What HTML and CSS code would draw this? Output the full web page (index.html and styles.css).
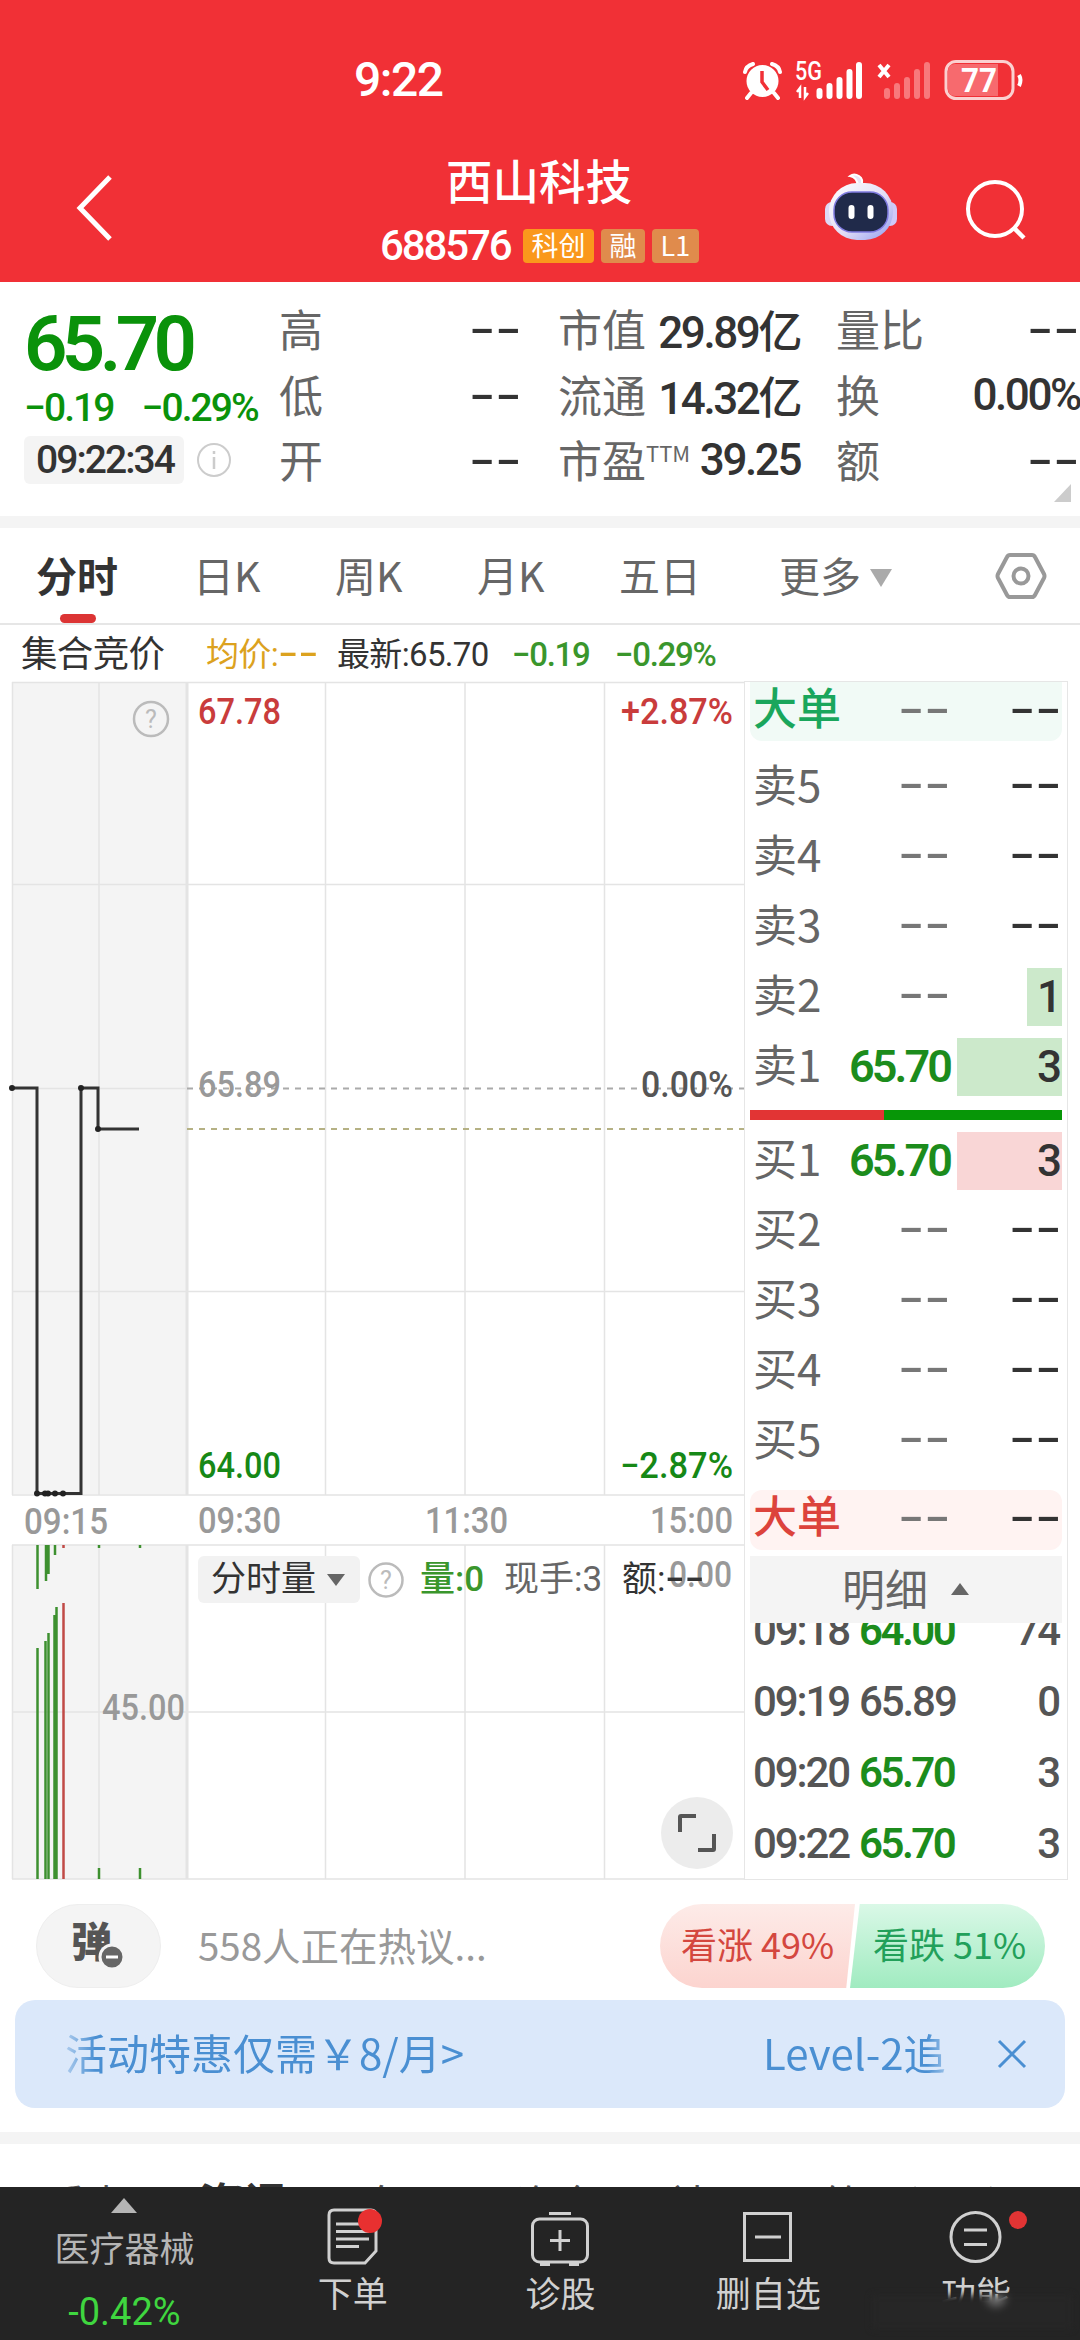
FILE: index.html
```html
<!DOCTYPE html>
<html lang="zh-CN">
<head>
    <meta charset="UTF-8">
    <meta name="viewport" content="width=device-width, initial-scale=1.0">
    <title>西山科技 688576</title>
    <link rel="stylesheet" href="styles.css">
</head>
<body>
    <header class="top">
        <div class="status-bar">
            <span class="clock">9:22</span>
            <svg class="status-icons" viewBox="738 54 288 50">
                <!-- alarm -->
                <circle cx="761.500" cy="80" r="16" fill="#fff"/>
                <path d="M744 71q1-6 8-8M779 71q-1-6-8-8M750 92l-4 5M773 92l4 5" stroke="#fff" stroke-width="4" fill="none" stroke-linecap="round"/>
                <path d="M761 70v11l6 8" stroke="#f13036" stroke-width="3.500" fill="none"/>
                <!-- signals -->
                <text class="net" x="794" y="79" textLength="27" lengthAdjust="spacingAndGlyphs">5G</text>
                <path d="M799 97V87l-3 4M804 86v10l3-4" stroke="#fff" stroke-width="2.500" fill="none"/>
                <path d="M818.500 95v-5M828.500 95V85M838.500 95V79M848.500 95V71M858 95V64" stroke="#fff" stroke-width="6" stroke-linecap="round"/>
                <path d="M878 64l10 12M888 64l-10 12" stroke="#fff" stroke-width="4"/>
                <path d="M886 95v-5M896 95V85M906 95V79M916 95V71M926 95V64" stroke="#f8797c" stroke-width="6" stroke-linecap="round"/>
                <!-- battery -->
                <rect x="945" y="60.500" width="67" height="37" rx="10" fill="#f13036" stroke="#fbd0d0" stroke-width="3"/>
                <path d="M954 63h43v32h-43q-7 0-7-7V70q0-7 7-7z" fill="#f76a6e"/>
                <path d="M1018 74q3 5 0 11" stroke="#fff" stroke-width="4" fill="none"/>
                <text class="battery" x="960" y="91" textLength="36" lengthAdjust="spacingAndGlyphs">77</text>
            </svg>
        </div>
        <div class="title-bar">
            <svg class="back" viewBox="0 0 44 70"><path d="M39 4L9 35l30 31" fill="none" stroke="#fff" stroke-width="5"/></svg>
            <div class="title">
                <h1>西山科技</h1>
                <div class="code-row">
                    <span class="num code">688576</span>
                    <span class="tag tag-main">科创</span>
                    <span class="tag">融</span>
                    <span class="tag">L1</span>
                </div>
            </div>
            <svg class="robot" viewBox="822 170 80 74">
                <defs>
                    <linearGradient id="shell" x1="0" y1="0" x2="1" y2="1">
                        <stop offset="0" stop-color="#fff"/>
                        <stop offset=".55" stop-color="#e3def6"/>
                        <stop offset="1" stop-color="#8f9cf0"/>
                    </linearGradient>
                </defs>
                <path d="M861 186q3-7-2-10q-5-3-9 0q7 1 8 10z" fill="#e9e4f7" stroke="#fff" stroke-width="2"/>
                <rect x="825" y="202" width="14" height="24" rx="7" fill="#ded9f5"/>
                <rect x="883" y="202" width="14" height="24" rx="7" fill="#cfc9f8"/>
                <rect x="829" y="183" width="64" height="57" rx="28" fill="url(#shell)"/>
                <rect x="834" y="192" width="54" height="40" rx="18" fill="#202a4a" stroke="#7f7be0" stroke-width="1.500"/>
                <path d="M851.500 208v8M870.500 208v8" stroke="#fff" stroke-width="6" stroke-linecap="round"/>
            </svg>
            <svg class="search" viewBox="0 0 64 64">
                <circle cx="31" cy="31" r="27" fill="none" stroke="#fff" stroke-width="4"/>
                <path d="M50 50l10 10" stroke="#fff" stroke-width="4.500"/>
            </svg>
        </div>
    </header>

    <section class="summary">
        <div class="quote">
            <div class="price">65.70</div>
            <div class="change"><span>−0.19</span><span>−0.29%</span></div>
            <div class="time-row">
                <span class="time num">09:22:34</span>
                <svg class="info" viewBox="0 0 36 36"><circle cx="18" cy="18" r="16" fill="none" stroke="#ccc" stroke-width="2"/><path d="M18 15v12M18 9v3" stroke="#ccc" stroke-width="2.500"/></svg>
            </div>
        </div>
        <div class="metrics">
            <div class="metric"><label>高</label><b class="dash">--</b></div>
            <div class="metric"><label>市值</label><b>29.89亿</b></div>
            <div class="metric"><label>量比</label><b class="dash">--</b></div>
            <div class="metric"><label>低</label><b class="dash">--</b></div>
            <div class="metric"><label>流通</label><b>14.32亿</b></div>
            <div class="metric"><label>换</label><b>0.00%</b></div>
            <div class="metric"><label>开</label><b class="dash">--</b></div>
            <div class="metric"><label>市盈<sup>TTM</sup></label><b>39.25</b></div>
            <div class="metric"><label>额</label><b class="dash">--</b></div>
        </div>
        <i class="corner"></i>
    </section>

    <nav class="tabs">
        <a class="tab active">分时</a>
        <a class="tab">日K</a>
        <a class="tab">周K</a>
        <a class="tab">月K</a>
        <a class="tab">五日</a>
        <a class="tab more">更多<i class="caret"></i></a>
        <svg class="setting" viewBox="0 0 52 48">
            <path d="M15 3h22q2 0 3 2l9 17q1 2 0 4l-9 17q-1 2-3 2H15q-2 0-3-2L3 26q-1-2 0-4l9-17q1-2 3-2z" fill="none" stroke="#999" stroke-width="4"/>
            <circle cx="26" cy="24" r="7.500" fill="none" stroke="#999" stroke-width="4"/>
        </svg>
    </nav>

    <div class="legend">
        <span class="auction">集合竞价</span>
        <span class="avg">均价:<b class="dash">--</b></span>
        <span class="last">最新:65.70</span>
        <span class="down">−0.19</span>
        <span class="down">−0.29%</span>
    </div>

    <main class="board">
        <div class="chart">
            <svg class="plot" viewBox="0 681 744 1200">
                <rect x="12" y="682" width="175" height="812" fill="#f4f4f4"/>
                <rect x="12" y="1545" width="175" height="334" fill="#f4f4f4"/>
                <path class="grid" d="M12 682.500H744M12 884.500H744M12 1088.500H187M12 1291.500H744M12 1495H744M12 1545H744M12 1712H744M12 1879H744M12.500 682V1495M99 682V1495M325.500 682V1495M465 682V1495M604.500 682V1495M12.500 1545V1879M99 1545V1879M325.500 1545V1879M465 1545V1879M604.500 1545V1879"/>
                <path class="grid strong" d="M187 682V1495M187 1545V1879"/>
                <path class="ref-line" d="M187 1088.500H744"/>
                <path class="ref-line last-line" d="M187 1129H744"/>

                <path class="line" d="M12 1088H37V1493.500H81V1088H98V1129H139"/>
                <g fill="#222">
                    <circle cx="12" cy="1088" r="3"/><circle cx="81" cy="1088" r="3"/><circle cx="98" cy="1129" r="3"/>
                    <circle cx="37" cy="1493.500" r="3"/><circle cx="45" cy="1493.500" r="3"/><circle cx="48" cy="1493.500" r="3"/>
                    <circle cx="55" cy="1493.500" r="3"/><circle cx="63" cy="1493.500" r="3"/>
                </g>

                <g stroke-width="2.500" stroke="#3d902f">
                    <path d="M37.500 1545v44M46 1545v36M48.500 1545v29M55 1545v10M99 1545v3M140 1545v3"/>
                    <path d="M37.500 1648V1879M45.500 1641V1879M48.500 1633V1879M54.500 1615V1879M56.500 1607V1879M99 1868v11M140 1868v11"/>
                    <path stroke="#c04a46" d="M63.500 1545v3M63.500 1603V1879"/>
                </g>

                <circle cx="151" cy="719" r="17" fill="none" stroke="#bbb" stroke-width="2.500"/>
                <text class="help" x="151" y="728" text-anchor="middle">?</text>
                <g class="axis">
                    <text class="up" x="198" y="724" textLength="83" lengthAdjust="spacingAndGlyphs">67.78</text>
                    <text class="up" x="621" y="724" textLength="112" lengthAdjust="spacingAndGlyphs">+2.87%</text>
                    <text x="198" y="1097" textLength="83" lengthAdjust="spacingAndGlyphs">65.89</text>
                    <text class="zero" x="641" y="1097" textLength="92" lengthAdjust="spacingAndGlyphs">0.00%</text>
                    <text class="down" x="198" y="1478" textLength="83" lengthAdjust="spacingAndGlyphs">64.00</text>
                    <text class="down" x="620" y="1478" textLength="113" lengthAdjust="spacingAndGlyphs">−2.87%</text>
                    <text x="24" y="1534" textLength="84" lengthAdjust="spacingAndGlyphs">09:15</text>
                    <text x="198" y="1533" textLength="83" lengthAdjust="spacingAndGlyphs">09:30</text>
                    <text x="425" y="1533" textLength="83" lengthAdjust="spacingAndGlyphs">11:30</text>
                    <text x="650" y="1533" textLength="83" lengthAdjust="spacingAndGlyphs">15:00</text>
                    <text x="102" y="1720" textLength="83" lengthAdjust="spacingAndGlyphs">45.00</text>
                    <text x="669" y="1587" textLength="63" lengthAdjust="spacingAndGlyphs">0.00</text>
                </g>
            </svg>
            <div class="volume-bar">
                <span class="picker">分时量<i class="caret"></i></span>
                <svg class="info" viewBox="0 0 36 36"><circle cx="18" cy="18" r="16.500" fill="none" stroke="#bbb" stroke-width="2.500"/><text class="help" x="18" y="27" text-anchor="middle">?</text></svg>
                <span class="vol down">量:0</span>
                <span class="hand">现手:3</span>
                <span class="amount">额:<b class="dash">--</b></span>
            </div>
            <div class="expand">
                <svg viewBox="0 0 72 72"><path d="M19 35V20q0-1 1-1h15M53 37v15q0 1-1 1H37" fill="none" stroke="#555" stroke-width="4"/></svg>
            </div>
        </div>

        <aside class="book">
            <div class="row big sell"><label>大单</label><b class="dash">--</b><b class="dash">--</b></div>
            <div class="levels">
                <div class="row"><label>卖5</label><b class="dash">--</b><b class="dash">--</b></div>
                <div class="row"><label>卖4</label><b class="dash">--</b><b class="dash">--</b></div>
                <div class="row"><label>卖3</label><b class="dash">--</b><b class="dash">--</b></div>
                <div class="row"><label>卖2</label><b class="dash">--</b><span class="qty ask" style="width: 35px">1</span></div>
                <div class="row"><label>卖1</label><b class="deal">65.70</b><span class="qty ask" style="width: 105px">3</span></div>
            </div>
            <div class="ratio"><i style="width: 134px"></i></div>
            <div class="levels">
                <div class="row"><label>买1</label><b class="deal">65.70</b><span class="qty bid" style="width: 105px">3</span></div>
                <div class="row"><label>买2</label><b class="dash">--</b><b class="dash">--</b></div>
                <div class="row"><label>买3</label><b class="dash">--</b><b class="dash">--</b></div>
                <div class="row"><label>买4</label><b class="dash">--</b><b class="dash">--</b></div>
                <div class="row"><label>买5</label><b class="dash">--</b><b class="dash">--</b></div>
            </div>
            <div class="row big buy"><label>大单</label><b class="dash">--</b><b class="dash">--</b></div>
            <div class="detail-head">明细<i class="caret up-caret"></i></div>
            <div class="ticks">
                <div class="tick"><span>09:18</span><b>64.00</b><span>74</span></div>
                <div class="tick"><span>09:19</span><span>65.89</span><span>0</span></div>
                <div class="tick"><span>09:20</span><b>65.70</b><span>3</span></div>
                <div class="tick"><span>09:22</span><b>65.70</b><span>3</span></div>
            </div>
        </aside>
    </main>

    <div class="discuss">
        <div class="bullet">弹<svg viewBox="0 0 28 28"><circle cx="14" cy="14" r="12" fill="#666" stroke="#f4f4f4" stroke-width="3"/><path d="M8 14h12" stroke="#fff" stroke-width="3"/></svg></div>
        <span class="talk">558人正在热议...</span>
        <div class="vote bull">看涨 49%</div>
        <div class="vote bear">看跌 51%</div>
    </div>

    <div class="promo">
        <span class="promo-text">活动特惠仅需￥8/月&gt;</span>
        <span class="promo-next">Level-2追</span>
        <svg class="close" viewBox="0 0 32 32"><path d="M3 3l26 26M29 3L3 29" stroke="#4a8fd2" stroke-width="3"/></svg>
    </div>

    <div class="news-tabs">
        <span>看点</span>
        <span class="current">资讯</span>
        <span>盘口</span>
        <span>资金</span>
        <span>社区</span>
        <span>简况(F10)</span>
    </div>

    <footer class="dock">
        <div class="sector">
            <i class="caret up-caret"></i>
            <span>医疗器械</span>
            <em>-0.42%</em>
        </div>
        <div class="dock-item">
            <svg viewBox="0 0 64 60"><path d="M13 4h37q5 0 5 5v36L44 57H13q-5 0-5-5V9q0-5 5-5z" fill="none" stroke="#d0d0d0" stroke-width="3"/><path d="M15 18h28M15 25.500h33M15 33h33M15 40.500h23" stroke="#d0d0d0" stroke-width="3"/><circle cx="49" cy="15" r="12" fill="#e83030"/></svg>
            <span>下单</span>
        </div>
        <div class="dock-item">
            <svg viewBox="0 0 64 60"><rect x="4.500" y="13" width="55" height="43" rx="7" fill="none" stroke="#d0d0d0" stroke-width="3"/><path d="M21 7.500h22M32 24v21M22 34.500h20M12 58.500h10M41 58.500h10" stroke="#d0d0d0" stroke-width="3"/></svg>
            <span>诊股</span>
        </div>
        <div class="dock-item">
            <svg viewBox="0 0 64 60"><path d="M8.500 7.500h46v47h-46zM19 31h26" fill="none" stroke="#d0d0d0" stroke-width="3"/></svg>
            <span>删自选</span>
        </div>
        <div class="dock-item func">
            <svg viewBox="0 0 64 60"><circle cx="31.500" cy="31" r="24.500" fill="none" stroke="#d0d0d0" stroke-width="3"/><path d="M20 24h23M20 38.500h23" stroke="#d0d0d0" stroke-width="3"/></svg>
            <i class="dot"></i>
            <span>功能</span>
            <i class="smudge"></i>
        </div>
    </footer>
</body>
</html>
```

FILE: styles.css
```css
* {
    box-sizing: border-box;
}
body {
    margin: 0;
    width: 1080px;
    height: 2340px;
    overflow: hidden;
    background: #fff;
    color: #333;
    font-family: "Noto Sans CJK SC", sans-serif;
    font-size: 42px;
}
svg {
    display: block;
    flex: none;
}
i, em {
    font-style: normal;
}
b {
    font-weight: 500;
}
.num {
    font-family: Roboto, "Noto Sans CJK SC", sans-serif;
    letter-spacing: -0.05em;
}
.dash {
    display: inline-block;
    font-family: "DejaVu Sans", sans-serif;
    font-size: 52px;
    font-weight: 400;
    line-height: 50px;
    letter-spacing: 0;
    padding-bottom: 11px;
    transform: scaleX(1.4);
    transform-origin: right center;
}
.caret {
    display: inline-block;
    border: 11px solid transparent;
    border-top: 18px solid #aaa;
    border-bottom: 0;
}
.up-caret {
    border-top: 0;
    border-bottom: 12px solid #666;
}

/* header */
.top {
    height: 282px;
    background: #f13036;
    color: #fff;
}
.status-bar {
    display: flex;
    height: 141px;
    padding: 55px 53px 0 354px;
    justify-content: space-between;
}
.clock {
    font: 500 48px/50px Roboto, sans-serif;
    letter-spacing: -1.5px;
}
.status-icons {
    width: 288px;
    height: 50px;
}
.net {
    font: 500 25px Roboto, sans-serif;
    fill: #fff;
}
.battery {
    font: 700 33px Roboto, sans-serif;
    fill: #fff;
}
.title-bar {
    display: flex;
    height: 141px;
    padding-left: 71px;
}
.back {
    width: 44px;
    height: 70px;
    margin-top: 32px;
}
.title {
    width: 400px;
    margin-left: 265px;
    margin-right: 42px;
}
h1 {
    margin: 10px 0 0 66px;
    font-size: 46.5px;
    font-weight: 500;
    line-height: 56px;
}
.code-row {
    display: flex;
    align-items: center;
    height: 34px;
    margin-top: 22px;
}
.code {
    width: 143px;
    font-size: 42px;
    font-weight: 500;
    line-height: 34px;
}
.tag {
    height: 34px;
    margin-right: 7px;
    padding: 0 8.5px;
    border-radius: 4px;
    background: #e08b4c;
    font-size: 27px;
    line-height: 32px;
}
.tag-main {
    background: #fa981c;
}
.robot {
    width: 80px;
    height: 74px;
    margin-top: 29px;
}
.search {
    width: 64px;
    height: 64px;
    margin: 37px 0 0 62px;
}

/* quote summary */
.summary {
    position: relative;
    display: flex;
    height: 246px;
    border-bottom: 12px solid #f4f4f4;
}
.quote {
    width: 279px;
    padding: 30px 0 0 24px;
    flex: none;
    font-family: Roboto, sans-serif;
    color: #0a920a;
}
.price {
    font-size: 76px;
    font-weight: 600;
    line-height: 64px;
    letter-spacing: -5.6px;
}
.change {
    display: flex;
    gap: 28px;
    margin-top: 12px;
    font-size: 39px;
    font-weight: 500;
    line-height: 40px;
    letter-spacing: -0.05em;
}
.time-row {
    display: flex;
    align-items: center;
    gap: 12px;
    margin-top: 8px;
}
.time {
    width: 160px;
    height: 48px;
    padding-left: 12px;
    border-radius: 6px;
    background: #f4f4f4;
    color: #333;
    font-size: 39px;
    font-weight: 500;
    line-height: 48px;
}
.info {
    width: 36px;
    height: 36px;
}
.metrics {
    display: grid;
    grid-template-columns: 243px 242px 244px;
    grid-auto-rows: 65.5px;
    column-gap: 36px;
    padding-top: 17px;
}
.metric {
    display: flex;
    justify-content: space-between;
    align-items: center;
    white-space: nowrap;
}
.metric .dash {
    padding-bottom: 9px;
}
.metric label {
    color: #666;
    font-size: 44px;
    line-height: 60px;
    margin-top: -7px;
}
.metric b:not(.dash) {
    margin-top: -5px;
    font-family: Roboto, "Noto Sans CJK SC", sans-serif;
    font-size: 44px;
    letter-spacing: -0.055em;
}
sup {
    font-size: 22px;
    line-height: 0;
}
.corner {
    position: absolute;
    left: 1054px;
    top: 202px;
    border-left: 17px solid transparent;
    border-bottom: 18px solid #ccc;
}

/* period tabs */
.tabs {
    display: flex;
    height: 97px;
    padding-left: 36px;
    border-bottom: 2px solid #e6e6e6;
    color: #666;
    font-size: 41px;
    line-height: 92px;
}
.tab {
    position: relative;
    width: 142px;
}
.tab:first-child {
    width: 157px;
}
.tab.active {
    color: #333;
    font-weight: 700;
}
.tab.active::after {
    content: "";
    position: absolute;
    left: 24px;
    bottom: 0;
    width: 36px;
    height: 9px;
    border-radius: 5px;
    background: #dc3434;
}
.tab:nth-child(5) {
    width: 160px;
}
.tab.more {
    width: 216px;
}
.more .caret {
    margin-left: 9px;
    vertical-align: 5px;
}
.setting {
    width: 52px;
    height: 48px;
    margin-top: 24px;
}
.legend {
    display: flex;
    height: 56px;
    padding-left: 21px;
    font-family: Roboto, "Noto Sans CJK SC", sans-serif;
    font-size: 33px;
    line-height: 60px;
    letter-spacing: -0.02em;
    white-space: nowrap;
}
.legend .dash {
    font-size: 40px;
    line-height: 30px;
    padding: 0;
    transform-origin: left center;
}
.auction {
    width: 185px;
    font-size: 36.5px;
}
.avg {
    width: 131px;
    color: #dca21e;
}
.last {
    width: 175px;
}
.legend .down {
    width: 103px;
    font-weight: 500;
    letter-spacing: -0.04em;
}
.down {
    color: #3a962c;
}

/* chart */
.board {
    display: flex;
    height: 1200px;
}
.chart {
    position: relative;
    width: 744px;
}
.plot {
    width: 744px;
    height: 1200px;
}
.grid {
    fill: none;
    stroke: #e4e4e4;
    stroke-width: 1.5;
}
.strong {
    stroke-width: 3;
}
.ref-line {
    stroke: #aaa;
    stroke-width: 2;
    stroke-dasharray: 6 6;
}
.last-line {
    stroke: #b5b184;
}
.line {
    fill: none;
    stroke: #333;
    stroke-width: 3;
}
.axis {
    font: 500 36px Roboto, sans-serif;
    fill: #999;
}
.axis .up {
    fill: #c93c3c;
}
.axis .down {
    fill: #168816;
}
.axis .zero {
    fill: #555;
}
.help {
    font: 25px Roboto, sans-serif;
    fill: #bbb;
}
.volume-bar {
    position: absolute;
    left: 198px;
    top: 875px;
    display: flex;
    align-items: center;
    height: 47px;
    font-family: Roboto, "Noto Sans CJK SC", sans-serif;
    font-size: 35px;
    line-height: 44px;
    white-space: nowrap;
}
.picker {
    width: 162px;
    height: 47px;
    margin-right: 8px;
    padding-left: 13px;
    border-radius: 6px;
    background: #f2f2f2;
    line-height: 48px;
}
.picker .caret {
    margin-left: 11px;
    vertical-align: 5px;
    border-width: 12px 9px 0;
    border-top-color: #666;
}
.vol {
    width: 84px;
    margin-left: 16px;
    font-weight: 500;
}
.hand {
    width: 118px;
    color: #666;
}
.amount .dash {
    font-size: 42px;
    line-height: 30px;
    padding: 0;
    transform: scaleX(1.3);
    transform-origin: left center;
}
.expand {
    position: absolute;
    left: 661px;
    top: 1116px;
    width: 72px;
    height: 72px;
    border-radius: 50%;
    background: #ececec;
}

/* order book */
.book {
    width: 324px;
    height: 1199px;
    padding: 0 5px;
    border: 1px solid #e6e6e6;
    overflow: hidden;
}
.row {
    display: grid;
    grid-template-columns: 95px 105px 1fr;
    justify-items: end;
    align-items: center;
    height: 70px;
}
.row label {
    justify-self: start;
    padding-left: 3px;
    color: #666;
    font-size: 44px;
    line-height: 58px;
    margin-top: -9px;
}
.row .dash {
    color: #333;
}
.row label + .dash {
    color: #777;
    margin-right: -1px;
}
.row.big {
    height: 59px;
    border-radius: 0 0 12px 12px;
}
.row.big label {
    margin-top: -13px;
}
.row.sell {
    background: #f1faf6;
    margin-bottom: 11px;
}
.sell label {
    color: #1aa65c;
    font-weight: 500;
}
.row.buy {
    height: 60px;
    margin: 14px 0 6px;
    border-radius: 12px;
    background: #fff3f2;
}
.buy label {
    color: #dc433c;
    font-weight: 500;
}
.deal {
    color: #1c8c1c;
    font: 600 45px/58px Roboto, sans-serif;
    letter-spacing: -0.065em;
}
.qty {
    height: 58px;
    font: 500 44px/58px Roboto, sans-serif;
    text-align: right;
}
.ask {
    background: #cce9cb;
}
.bid {
    background: #f9d6d6;
}
.ratio {
    height: 10px;
    margin: 8px 0 6px;
    background: #079607;
}
.ratio i {
    display: block;
    height: 10px;
    background: #e23434;
}
.detail-head {
    display: flex;
    align-items: center;
    height: 67px;
    padding: 0 0 5px 92px;
    background: #f4f4f4;
    color: #666;
    font-size: 43px;
}
.detail-head .caret {
    margin: 4px 0 0 23px;
    border-left-width: 9px;
    border-right-width: 9px;
}
.ticks {
    height: 255px;
    overflow: hidden;
    font: 500 42px/71px Roboto, sans-serif;
    letter-spacing: -0.05em;
    color: #555;
}
.tick {
    display: grid;
    grid-template-columns: 106px 110px 1fr;
    padding: 0 3px;
}
.tick:first-child {
    margin-top: -28px;
}
.tick b {
    color: #1c8c1c;
    font-weight: 600;
    letter-spacing: -0.06em;
}
.tick :last-child {
    text-align: right;
}

/* discussion and promo */
.discuss {
    display: flex;
    align-items: center;
    height: 84px;
    margin-top: 23px;
    padding-left: 36px;
}
.bullet {
    position: relative;
    width: 125px;
    height: 84px;
    padding-left: 34px;
    border: 1px solid #eee;
    border-radius: 42px;
    background: #f4f4f4;
    color: #555;
    font-size: 41px;
    font-weight: 900;
    line-height: 68px;
}
.bullet svg {
    position: absolute;
    left: 61px;
    top: 38px;
    width: 28px;
    height: 28px;
}
.talk {
    width: 462px;
    margin: -5px 0 0 37px;
    color: #999;
    font-size: 38.5px;
}
.vote {
    width: 195px;
    height: 84px;
    font-size: 36px;
    line-height: 78px;
    white-space: nowrap;
}
.bull {
    padding-left: 21px;
    border-radius: 42px 0 0 42px;
    background: linear-gradient(#fdebe8, #fcd4cf);
    clip-path: polygon(0 0, 100% 0, 95.5% 100%, 0 100%);
    color: #d4473f;
}
.bear {
    margin-left: -5px;
    padding-left: 23px;
    border-radius: 0 42px 42px 0;
    background: linear-gradient(#daf8e7, #a0ebc0);
    clip-path: polygon(5% 0, 100% 0, 100% 100%, 0 100%);
    color: #22a05a;
}
.promo {
    display: flex;
    align-items: center;
    height: 108px;
    margin: 12px 15px 24px;
    padding-left: 50px;
    border-radius: 20px;
    background: #dbe8fa;
    color: #4a8fd2;
    line-height: 100px;
    white-space: nowrap;
}
.promo span {
    margin-top: -4px;
}
.promo-text {
    width: 698px;
    -webkit-mask-image: linear-gradient(90deg, rgba(0, 0, 0, .3), #000 30px);
    mask-image: linear-gradient(90deg, rgba(0, 0, 0, .3), #000 30px);
}
.promo-next {
    width: 188px;
    overflow: hidden;
    font-size: 42px;
    -webkit-mask-image: linear-gradient(270deg, rgba(0, 0, 0, .3), #000 24px);
    mask-image: linear-gradient(270deg, rgba(0, 0, 0, .3), #000 24px);
}
.close {
    width: 32px;
    height: 32px;
    margin-left: 45px;
}
.news-tabs {
    display: flex;
    gap: 72px;
    height: 55px;
    padding: 28px 0 0 45px;
    border-top: 12px solid #f4f4f4;
    overflow: hidden;
    color: #555;
    font-size: 41px;
    line-height: 60px;
    white-space: nowrap;
}
.news-tabs .current {
    color: #333;
    font-size: 45px;
    font-weight: 700;
}

/* bottom dock */
.dock {
    position: relative;
    display: flex;
    height: 153px;
    background: #242424;
    color: #d0d0d0;
    font-size: 35px;
}
.sector {
    width: 249px;
    display: flex;
    flex-direction: column;
    align-items: center;
    padding-top: 11px;
    color: #b5b5b5;
}
.sector .caret {
    border-width: 0 13px 15px;
    border-bottom-color: #b5b5b5;
}
.sector span {
    line-height: 68px;
}
.sector em {
    margin-top: 7px;
    color: #3fd63f;
    font: 38px/48px Roboto, sans-serif;
}
.dock-item {
    position: relative;
    width: 208px;
    display: flex;
    flex-direction: column;
    align-items: center;
    padding-top: 19px;
}
.dock-item svg {
    width: 64px;
    height: 60px;
}
.dock-item span {
    line-height: 52px;
}
.dot {
    position: absolute;
    left: 137px;
    top: 24px;
    width: 18px;
    height: 18px;
    border-radius: 50%;
    background: #e23434;
}
.smudge {
    position: absolute;
    left: 0;
    top: 108px;
    width: 200px;
    height: 34px;
    background: radial-gradient(ellipse 14px 14px at 124px 2px, #888, #262626);
    filter: blur(3px);
}
```
